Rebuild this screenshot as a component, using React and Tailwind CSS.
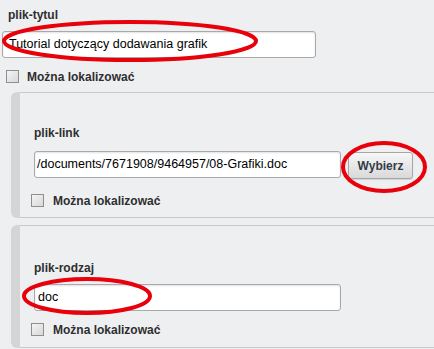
import React from "react";

function Checkbox() {
  return (
    <div className="w-[13px] h-[13px] border border-[#8f8f8f] bg-gradient-to-br from-[#f4f4f4] to-[#d8d8d8] shrink-0" />
  );
}

function CheckRow({ gap }) {
  return (
    <div className={`flex items-center h-[13px] ${gap}`}>
      <Checkbox />
      <span className="text-[12px] font-bold leading-[14px] text-[#2e2e2e]">Można lokalizować</span>
    </div>
  );
}

function TextInput({ value, w, pl }) {
  return (
    <div
      className={`${w} h-[27px] bg-white border border-[#a9a9a9] rounded-[3px] shadow-[inset_0_1px_2px_rgba(0,0,0,0.12)] flex items-center ${pl} text-[12.5px] text-black overflow-hidden whitespace-nowrap`}
    >
      {value}
    </div>
  );
}

export default function App() {
  return (
    <div
      className="relative w-[434px] h-[349px] overflow-hidden bg-[#eeeff1]"
      style={{ fontFamily: '"Liberation Sans", Arial, sans-serif' }}
    >
      {/* Section 1 */}
      <div className="pt-[8px] pl-[8px] text-[12px] font-bold leading-[14px] text-[#2e2e2e]">plik-tytul</div>
      <div className="mt-[9px] ml-[2px]">
        <TextInput value="Tutorial dotyczący dodawania grafik" w="w-[314px]" pl="pl-[6px]" />
      </div>
      <div className="mt-[12px] ml-[6px]">
        <CheckRow gap="gap-[8px]" />
      </div>

      {/* Panel 1 */}
      <div className="mt-[9px] ml-[11px] bg-[#d5d5d5] rounded-l-[6px] pl-[9px]">
        <div className="bg-[#eeeff1] border-y border-[#c9c9c9] pl-[14px] pt-[33px] pb-[10px]">
          <div className="text-[12px] font-bold leading-[14px] text-[#2e2e2e]">plik-link</div>
          <div className="mt-[11px] flex items-start gap-[7px]">
            <TextInput value="/documents/7671908/9464957/08-Grafiki.doc" w="w-[307px]" pl="pl-[2px]" />
            <div className="mt-[1px] w-[65px] h-[27px] rounded-[3px] border border-[#a6a6a6] bg-gradient-to-b from-[#f7f7f7] to-[#d9d9d9] shadow-[0_1px_1px_rgba(0,0,0,0.12)] flex items-center justify-center text-[12px] font-bold text-[#323c48]">
              Wybierz
            </div>
          </div>
          <div className="mt-[15px] -ml-[3px]">
            <CheckRow gap="gap-[9px]" />
          </div>
        </div>
      </div>

      {/* Panel 2 */}
      <div className="mt-[7px] ml-[11px] bg-[#d5d5d5] rounded-l-[6px] pl-[9px]">
        <div className="bg-[#eeeff1] border-y border-[#c9c9c9] pl-[14px] pt-[35px] pb-[11px]">
          <div className="text-[12px] font-bold leading-[14px] text-[#2e2e2e]">plik-rodzaj</div>
          <div className="mt-[9px]">
            <TextInput value="doc" w="w-[307px]" pl="pl-[3px]" />
          </div>
          <div className="mt-[12px] -ml-[3px]">
            <CheckRow gap="gap-[9px]" />
          </div>
        </div>
      </div>

      {/* Red annotation ellipses */}
      <svg className="absolute inset-0 pointer-events-none" width="434" height="349" viewBox="0 0 434 349">
        <ellipse cx="130" cy="41" rx="126" ry="19" fill="none" stroke="#e8000b" strokeWidth="4" />
        <ellipse cx="384" cy="167" rx="41" ry="24" fill="none" stroke="#e8000b" strokeWidth="4" />
        <ellipse cx="87" cy="296" rx="63" ry="17" fill="none" stroke="#e8000b" strokeWidth="4" />
      </svg>
    </div>
  );
}
